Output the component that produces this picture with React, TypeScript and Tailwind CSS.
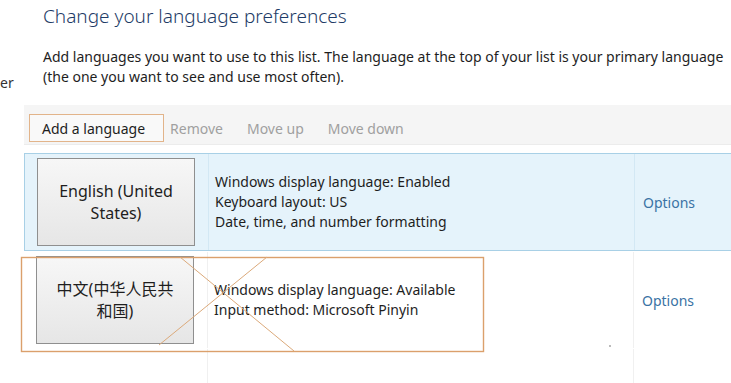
import React from 'react';

const font = { fontFamily: '"Noto Sans", "Noto Sans CJK SC", sans-serif' };

type Lang = {
  name: React.ReactNode;
  lines: string[];
  selected?: boolean;
};

const languages: Lang[] = [
  {
    name: (
      <>
        English (United
        <br />
        States)
      </>
    ),
    lines: [
      'Windows display language: Enabled',
      'Keyboard layout: US',
      'Date, time, and number formatting',
    ],
    selected: true,
  },
  {
    name: (
      <>
        中文(中华人民共
        <br />
        和国)
      </>
    ),
    lines: ['Windows display language: Available', 'Input method: Microsoft Pinyin'],
  },
];

function LanguageRow({ lang }: { lang: Lang }) {
  const rowBg = lang.selected
    ? 'bg-[#e5f3fb] border-y border-l border-[#a8d0e6]'
    : 'bg-white border-y border-transparent';
  const divider = lang.selected ? 'border-[#d3e8f4]' : 'border-[#f0f0f0]';
  return (
    <div className={`grid grid-cols-[183px_426px_1fr] h-[98px] ${rowBg}`}>
      <div className="flex items-center pl-[12px]">
        <div className="w-[158px] h-[88px] border border-[#8f8f8f] bg-gradient-to-b from-[#f7f7f7] to-[#e6e6e6] flex items-center justify-center text-center text-[16px] leading-[22px] text-[#1e1e1e]">
          <span>{lang.name}</span>
        </div>
      </div>
      <div className={`flex flex-col justify-center pl-[6px] text-[14px] leading-[20px] text-[#1e1e1e] border-l ${divider}`}>
        {lang.lines.map((l) => (
          <div key={l} className="whitespace-nowrap">
            {l}
          </div>
        ))}
      </div>
      <div className={`flex items-center pl-[8px] text-[14px] text-[#3a72a4] border-l ${divider}`}>Options</div>
    </div>
  );
}

export default function App() {
  return (
    <div className="w-[731px] h-[383px] overflow-hidden bg-white flex relative" style={font}>
      {/* Left nav, cut off */}
      <div className="w-[24px] shrink-0 pt-[73px] text-[14px] text-[#333] leading-[20px] overflow-hidden">er</div>

      <div className="flex-1 flex flex-col min-w-0">
        <h1 className="pl-[19px] pt-[3px] text-[19px] leading-[26px] font-light text-[#1e3b66] whitespace-nowrap">
          Change your language preferences
        </h1>
        <p className="pl-[19px] mt-[18px] text-[14px] leading-[20px] text-[#1e1e1e] whitespace-nowrap">
          Add languages you want to use to this list. The language at the top of your list is your primary language
          <br />
          (the one you want to see and use most often).
        </p>

        {/* Toolbar */}
        <div className="mt-[18px] h-[40px] bg-[#f5f5f5] border-b border-[#ececec] flex items-start pt-[9px] pl-[5px] text-[14px]">
          <button className="h-[28px] pl-[12px] pr-[18px] border border-[#e2b48a] bg-white/40 text-[#1e1e1e]">
            Add a language
          </button>
          <span className="ml-[6px] h-[28px] flex items-center text-[#a0a0a0]">Remove</span>
          <span className="ml-[24px] h-[28px] flex items-center text-[#a0a0a0]">Move up</span>
          <span className="ml-[24px] h-[28px] flex items-center text-[#a0a0a0]">Move down</span>
        </div>

        {/* Language list */}
        <div className="mt-[8px] flex flex-col flex-1">
          {languages.map((lang, i) => (
            <LanguageRow key={i} lang={lang} />
          ))}
          <div className="grid grid-cols-[183px_426px_1fr] flex-1">
            <div />
            <div className="border-l border-[#f0f0f0] relative">
              <span className="absolute left-[401px] top-[-4px] w-[2px] h-[2px] bg-[#bbb]" />
            </div>
            <div className="border-l border-[#f0f0f0]" />
          </div>
        </div>
      </div>

      {/* Annotation overlay */}
      <svg className="absolute left-0 top-0 pointer-events-none" width="731" height="383">
        <rect x="21.5" y="257.5" width="462" height="94" fill="none" stroke="#dba06c" strokeWidth="1.4" />
        <line x1="180" y1="257" x2="294" y2="351" stroke="#dba97a" strokeWidth="1" />
        <line x1="267" y1="257" x2="159" y2="345" stroke="#dba97a" strokeWidth="1" />
      </svg>
    </div>
  );
}
